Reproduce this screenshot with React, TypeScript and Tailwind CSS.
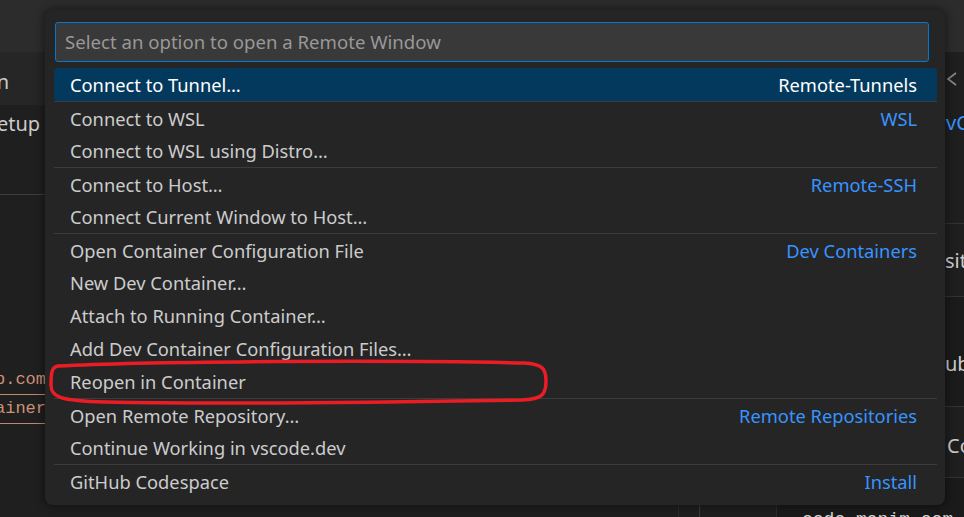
import React from "react";

type Item = { label: string; detail?: string; sep?: boolean; active?: boolean };

const items: Item[] = [
  { label: "Connect to Tunnel…", detail: "Remote-Tunnels", active: true },
  { label: "Connect to WSL", detail: "WSL", sep: true },
  { label: "Connect to WSL using Distro…" },
  { label: "Connect to Host…", detail: "Remote-SSH", sep: true },
  { label: "Connect Current Window to Host…" },
  { label: "Open Container Configuration File", detail: "Dev Containers", sep: true },
  { label: "New Dev Container…" },
  { label: "Attach to Running Container…" },
  { label: "Add Dev Container Configuration Files…" },
  { label: "Reopen in Container" },
  { label: "Open Remote Repository…", detail: "Remote Repositories", sep: true },
  { label: "Continue Working in vscode.dev" },
  { label: "GitHub Codespace", detail: "Install", sep: true },
];

const ui = { fontFamily: '"Noto Sans", "Open Sans", sans-serif' };
const mono = { fontFamily: '"Liberation Mono", "DejaVu Sans Mono", monospace' };

export default function App() {
  return (
    <div className="relative w-[964px] h-[517px] overflow-hidden bg-[#1f1f1f] text-[#cccccc]" style={ui}>
      {/* background window */}
      <div className="h-[52px] bg-[#2c2c2c]" />
      <div className="flex h-[465px]">
        {/* left editor area */}
        <div className="w-[679px] shrink-0 border-r border-[#2b2b2b] flex flex-col overflow-hidden">
          <div className="h-[53px] bg-[#262626] flex items-center text-[20px] whitespace-nowrap pt-[6px]">
            <span className="-ml-[28px]">Run</span>
          </div>
          <div className="h-[90px] border-b border-[#3c3c3c] pt-[4px] text-[20px] whitespace-nowrap">
            <span className="-ml-[14px]">Setup</span>
          </div>
          <div className="pt-[171px] text-[17px] text-[#ce9178] whitespace-nowrap" style={mono}>
            <div className="h-[29px] leading-[28px] -ml-[5px] w-[60px] border-b border-[#c0896c]">p.com/devcontainers</div>
            <div className="h-[29px] leading-[28px] -ml-[5px] w-[60px] border-b border-[#c0896c]">ainers</div>
          </div>
        </div>
        <div className="w-[21px] shrink-0 border-r border-[#3c3c3c]" />
        {/* right panel */}
        <div className="flex-1 min-w-0 overflow-hidden flex flex-col text-[20px] whitespace-nowrap">
          <div className="h-[171px] shrink-0 flex flex-col pl-[246px] pt-[20px]">
            <svg width="12" height="14" viewBox="0 0 12 14">
              <path d="M10 1 L2 7 L10 13" fill="none" stroke="#8b8b8b" strokeWidth="1.6" />
            </svg>
            <div className="mt-[22px] text-[#3794ff]">vContainers</div>
          </div>
          <div className="h-[73px] shrink-0 border-t border-[#333333] pl-[245px] pt-[22px]">sitory</div>
          <div className="h-[110px] shrink-0 border-t border-[#333333] bg-[#1b1b1b] pl-[245px] pt-[52px]">ub Codespaces</div>
          <div className="h-[71px] shrink-0 border-t border-[#333333] pl-[247px] pt-[24px]">Codespaces</div>
          <div className="flex-1 border-t border-[#333333] flex">
            <div className="w-[77px] shrink-0 border-r border-[#2b2b2b]" />
            <div className="flex-1 bg-[#1a1a1a] pl-[25px] pt-[29px] text-[18px] text-[#d4d4d4]" style={mono}>
              code manim com
            </div>
          </div>
        </div>
      </div>

      {/* quick pick overlay */}
      <div className="absolute left-[45px] top-[10px] w-[900px] h-[495px] rounded-[8px] bg-[#252526] shadow-[0_0_8px_2px_rgba(0,0,0,0.4)] flex flex-col">
        <div className="mt-[12px] ml-[10px] mr-[16px] h-[40px] rounded-[3px] border border-[#0078d4] bg-[#393939] flex items-center px-[9px] text-[18.6px] text-[#989898]">
          Select an option to open a Remote Window
        </div>
        <div className="mt-[6px] ml-[9px] mr-[8px] flex flex-col">
          {items.map((it, i) => (
            <div
              key={i}
              className={
                "h-[33px] flex items-center justify-between pl-[16px] pr-[20px] text-[18.3px] pt-[1px] " +
                (it.sep ? "border-t border-[#3c3c3c] " : "") +
                (it.active ? "bg-[#04395e] text-white rounded-[4px]" : "text-[#cccccc]")
              }
            >
              <span>{it.label}</span>
              {it.detail && (
                <span className={it.active ? "text-white" : "text-[#3794ff]"}>{it.detail}</span>
              )}
            </div>
          ))}
        </div>
      </div>

      {/* red annotation */}
      <svg className="absolute inset-0 pointer-events-none" width="964" height="517" viewBox="0 0 964 517">
        <path
          d="M58 366 C150 361 400 360 524 363 C543 364 546 369 546 381 C546 395 542 399 522 400 C400 402 200 404 105 402 C60 401 51 397 51 385 C51 372 52 367 58 366 Z"
          fill="none"
          stroke="#ec1c24"
          strokeWidth="3.5"
        />
      </svg>
    </div>
  );
}
